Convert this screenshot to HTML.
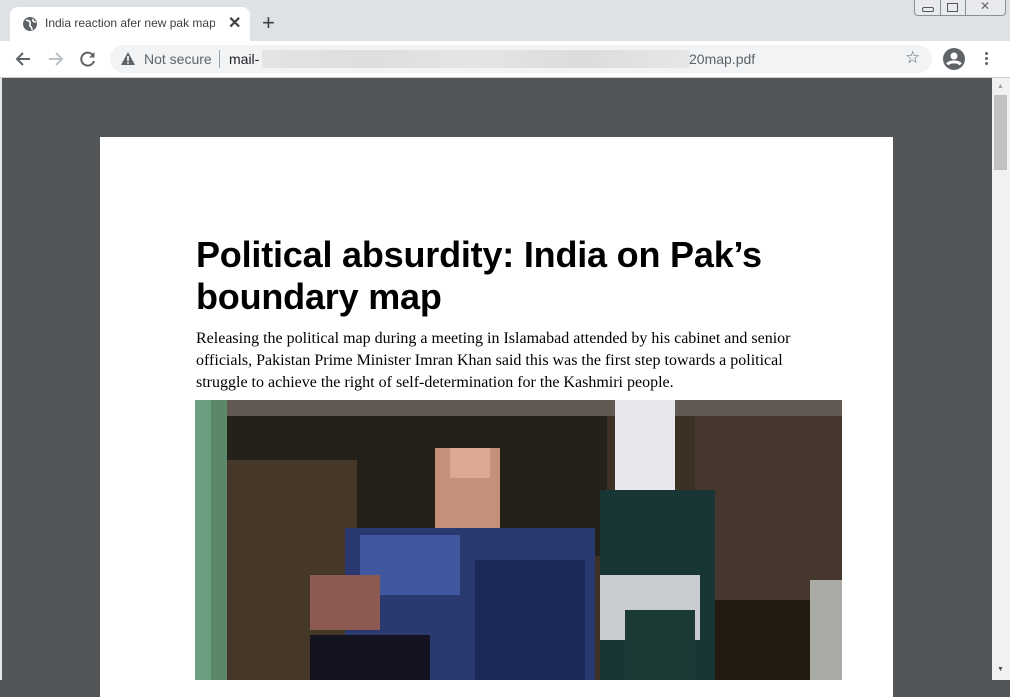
<!DOCTYPE html>
<html><head><meta charset="utf-8"><style>
*{margin:0;padding:0;box-sizing:border-box}
body{width:1010px;height:680px;overflow:hidden;background:#525659;position:relative;font-family:"Liberation Sans",sans-serif}
.abs{position:absolute}
</style></head><body>
<!-- tab strip -->
<div class="abs" style="left:0;top:0;width:1010px;height:41px;background:#dee1e6"></div>
<div class="abs" style="left:10px;top:7px;width:240px;height:34px;background:#fff;border-radius:8px 8px 0 0"></div>
<svg class="abs" style="left:22px;top:16px" width="16" height="16" viewBox="0 0 16 16"><circle cx="8" cy="8" r="7" fill="#5f6368"/><path d="M4 4c2 1 3 0 4 2s-1 3 0 4 2 1 2 4M11 3c-1 2 1 3 3 3" stroke="#fff" stroke-width="1.6" fill="none"/></svg>
<div class="abs" style="left:45px;top:16px;font-size:12px;color:#3c4043;width:170px;white-space:nowrap;overflow:hidden">India reaction afer new pak map</div>
<div class="abs" style="left:228px;top:13px;font-size:16px;color:#3c4043;font-weight:bold">✕</div>
<div class="abs" style="left:262px;top:10px;font-size:22px;color:#3c4043">+</div>
<!-- window controls -->
<div class="abs" style="left:914px;top:0;width:92px;height:16px;border:1px solid #8a8f96;border-top:none;border-radius:0 0 4px 4px;background:#e8eaed"></div>
<div class="abs" style="left:940px;top:0;width:1px;height:16px;background:#8a8f96"></div>
<div class="abs" style="left:965px;top:0;width:1px;height:16px;background:#8a8f96"></div>
<div class="abs" style="left:922px;top:7px;width:12px;height:5px;border:1px solid #555;border-radius:2px"></div>
<div class="abs" style="left:947px;top:3px;width:11px;height:9px;border:1px solid #555"></div>
<div class="abs" style="left:980px;top:-1px;font-size:12px;color:#666">✕</div>
<!-- toolbar -->
<div class="abs" style="left:0;top:41px;width:1010px;height:36px;background:#fff"></div>
<svg class="abs" style="left:14px;top:50px" width="18" height="18" viewBox="0 0 18 18"><path d="M16 9H3M9 3L3 9l6 6" stroke="#5f6368" stroke-width="2" fill="none"/></svg>
<svg class="abs" style="left:47px;top:50px" width="18" height="18" viewBox="0 0 18 18"><path d="M2 9h13M9 3l6 6-6 6" stroke="#bdc1c6" stroke-width="2" fill="none"/></svg>
<svg class="abs" style="left:79px;top:50px" width="18" height="18" viewBox="0 0 18 18"><path d="M14.5 6A6.5 6.5 0 1 0 15 11" stroke="#5f6368" stroke-width="2" fill="none"/><path d="M15.5 2v5.5H10z" fill="#5f6368"/></svg>
<div class="abs" style="left:110px;top:45px;width:822px;height:28px;background:#f1f3f4;border-radius:14px"></div>
<svg class="abs" style="left:120px;top:51px" width="16" height="15" viewBox="0 0 16 15"><path d="M8 1L15 14H1z" fill="#5f6368"/><rect x="7.2" y="5" width="1.6" height="5" fill="#fff"/><rect x="7.2" y="11" width="1.6" height="1.6" fill="#fff"/></svg>
<div class="abs" style="left:144px;top:51px;font-size:14px;color:#5f6368">Not secure</div>
<div class="abs" style="left:219px;top:50px;width:1px;height:18px;background:#9aa0a6"></div>
<div class="abs" style="left:229px;top:51px;font-size:14px;color:#202124">mail-</div>
<div class="abs" style="left:262px;top:50px;width:428px;height:18px;background:linear-gradient(90deg,#e2e4e6,#dcdedf,#e4e5e7,#dadcde,#e6e7e8)"></div>
<div class="abs" style="left:689px;top:51px;font-size:14px;color:#5f6368">20map.pdf</div>
<div class="abs" style="left:905px;top:48px;font-size:17px;color:#5f6368">☆</div>
<svg class="abs" style="left:943px;top:48px" width="22" height="22" viewBox="0 0 22 22"><circle cx="11" cy="11" r="11" fill="#5f6368"/><circle cx="11" cy="8" r="3.5" fill="#fff"/><path d="M4.5 16.5c2-3.5 11-3.5 13 0" stroke="#fff" stroke-width="3" fill="none"/></svg>
<div class="abs" style="left:985px;top:52px;width:3px;height:3px;background:#5f6368;border-radius:50%;box-shadow:0 5px 0 #5f6368,0 10px 0 #5f6368"></div>
<div class="abs" style="left:0;top:77px;width:1010px;height:1px;background:#ccc"></div>
<!-- scrollbar -->
<div class="abs" style="left:992px;top:78px;width:18px;height:602px;background:#f1f1f1"></div>
<div class="abs" style="left:994px;top:95px;width:13px;height:75px;background:#c1c1c1"></div>
<div class="abs" style="left:997px;top:83px;font-size:7px;color:#a0a0a0">▲</div>
<div class="abs" style="left:997px;top:666px;font-size:7px;color:#505050">▼</div>
<div class="abs" style="left:0;top:78px;width:2px;height:602px;background:#e6e6e6"></div>
<!-- page -->
<div class="abs" style="left:100px;top:137px;width:793px;height:560px;background:#fff"></div>
<div class="abs" style="left:196px;top:234px;font-size:36px;font-weight:bold;line-height:42px;color:#000;width:640px;letter-spacing:-0.2px">Political absurdity: India on Pak’s boundary map</div>
<div class="abs" style="left:196px;top:328px;font-family:'Liberation Serif',serif;font-size:16px;line-height:22px;color:#000;width:640px">Releasing the political map during a meeting in Islamabad attended by his cabinet and senior officials, Pakistan Prime Minister Imran Khan said this was the first step towards a political struggle to achieve the right of self-determination for the Kashmiri people.</div>
<!-- image -->
<div class="abs" style="left:195px;top:400px;width:647px;height:280px;background:#3d3024;overflow:hidden">
 <div class="abs" style="left:0;top:0;width:647px;height:16px;background:#625a52"></div>
 <div class="abs" style="left:0;top:0;width:32px;height:280px;background:linear-gradient(90deg,#6aa080 50%,#5a8868 50%)"></div>
 <div class="abs" style="left:32px;top:16px;width:380px;height:140px;background:#24201a"></div>
 <div class="abs" style="left:32px;top:60px;width:130px;height:220px;background:#463829"></div>
 <div class="abs" style="left:500px;top:16px;width:147px;height:280px;background:#45372d"></div>
 <div class="abs" style="left:240px;top:48px;width:65px;height:90px;background:#c4907a"></div>
 <div class="abs" style="left:255px;top:48px;width:40px;height:30px;background:#dba894"></div>
 <div class="abs" style="left:150px;top:128px;width:250px;height:152px;background:#2a3a70"></div>
 <div class="abs" style="left:165px;top:135px;width:100px;height:60px;background:#3f58a0"></div>
 <div class="abs" style="left:280px;top:160px;width:110px;height:120px;background:#1c2a58"></div>
 <div class="abs" style="left:115px;top:175px;width:70px;height:55px;background:#8c5a50"></div>
 <div class="abs" style="left:115px;top:235px;width:120px;height:45px;background:#141420"></div>
 <div class="abs" style="left:405px;top:90px;width:115px;height:190px;background:#193636"></div>
 <div class="abs" style="left:420px;top:0;width:60px;height:90px;background:#e6e8ee"></div>
 <div class="abs" style="left:405px;top:175px;width:100px;height:65px;background:#c8ccd0"></div>
 <div class="abs" style="left:430px;top:210px;width:70px;height:70px;background:#1b3a36"></div>
 <div class="abs" style="left:520px;top:200px;width:105px;height:80px;background:#241c10"></div>
 <div class="abs" style="left:615px;top:180px;width:32px;height:100px;background:#a8aca4"></div>
</div>
</body></html>
